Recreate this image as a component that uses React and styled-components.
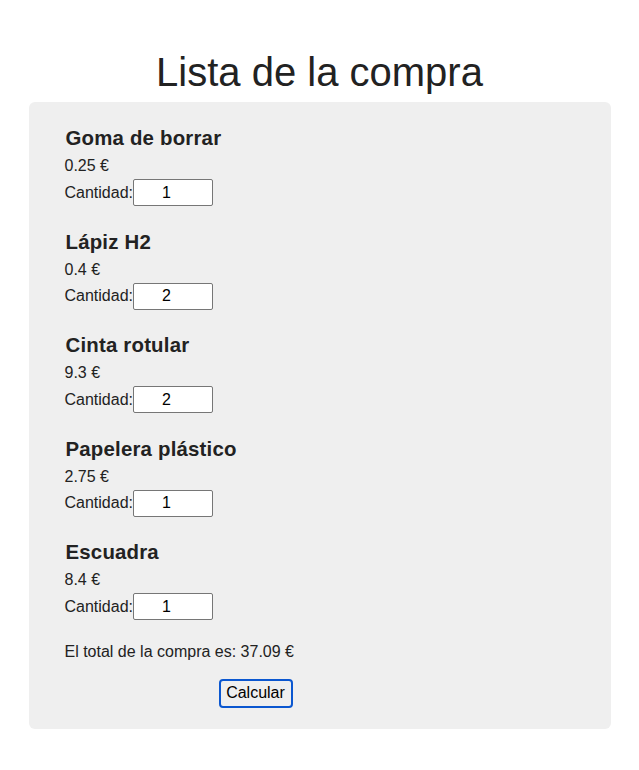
import React, { useState } from "react";
import styled, { createGlobalStyle } from "styled-components";

const GlobalStyle = createGlobalStyle`
  body {
    margin: 0;
    background: #fff;
    color: #222;
    font-family: "Liberation Sans", Arial, sans-serif;
  }
`;

const Page = styled.div`
  padding-top: 50px;
  display: flex;
  flex-direction: column;
  align-items: center;
`;

const Title = styled.h1`
  margin: 0 0 7px;
  font-size: 40px;
  font-weight: 400;
  line-height: 45px;
  color: #222;
`;

const Panel = styled.div`
  width: 582px;
  box-sizing: border-box;
  background: #efefef;
  border-radius: 6px;
  padding: 25px 36px 21px;
`;

const Item = styled.div`
  margin-bottom: 24.5px;
`;

const ItemName = styled.h3`
  margin: 0 0 7px 1px;
  font-size: 20.4px;
  font-weight: 700;
  line-height: 23px;
  letter-spacing: 0.2px;
`;

const Price = styled.div`
  font-size: 16px;
  line-height: 18px;
  margin-bottom: 4px;
`;

const QtyRow = styled.label`
  display: flex;
  align-items: center;
  font-size: 16px;
  line-height: 18px;
`;

const QtyInput = styled.input`
  box-sizing: border-box;
  width: 80px;
  height: 27px;
  margin: 0;
  padding: 0 15px 0 2px;
  border: 1px solid #767676;
  border-radius: 2px;
  background: #fff;
  font-family: "Liberation Sans", Arial, sans-serif;
  font-size: 16px;
  color: #000;
  text-align: center;
`;

const Total = styled.p`
  margin: -2px 0 18px;
  font-size: 16px;
  line-height: 18px;
`;

const Actions = styled.div`
  padding-left: 154px;
`;

const Button = styled.button`
  box-sizing: border-box;
  width: 74px;
  height: 29px;
  padding: 0;
  border: 2px solid #0b57d0;
  border-radius: 4px;
  background: #efefef;
  color: #000;
  font-family: "Liberation Sans", Arial, sans-serif;
  font-size: 16px;
  cursor: pointer;
`;

const products = [
  { name: "Goma de borrar", price: 0.25, qty: 1 },
  { name: "Lápiz H2", price: 0.4, qty: 2 },
  { name: "Cinta rotular", price: 9.3, qty: 2 },
  { name: "Papelera plástico", price: 2.75, qty: 1 },
  { name: "Escuadra", price: 8.4, qty: 1 },
];

export default function App() {
  const [qty, setQty] = useState(products.map((p) => p.qty));
  const [total, setTotal] = useState(37.09);

  const calcular = () => {
    const t = products.reduce((acc, p, i) => acc + p.price * (Number(qty[i]) || 0), 0);
    setTotal(Math.round(t * 100) / 100);
  };

  return (
    <>
      <GlobalStyle />
      <Page>
        <Title>Lista de la compra</Title>
        <Panel>
          {products.map((p, i) => (
            <Item key={p.name}>
              <ItemName>{p.name}</ItemName>
              <Price>{p.price} €</Price>
              <QtyRow>
                Cantidad:
                <QtyInput
                  type="text"
                  inputMode="numeric"
                  value={qty[i]}
                  onChange={(e) => {
                    const next = [...qty];
                    next[i] = e.target.value;
                    setQty(next);
                  }}
                />
              </QtyRow>
            </Item>
          ))}
          <Total>El total de la compra es: {total} €</Total>
          <Actions>
            <Button onClick={calcular}>Calcular</Button>
          </Actions>
        </Panel>
      </Page>
    </>
  );
}
